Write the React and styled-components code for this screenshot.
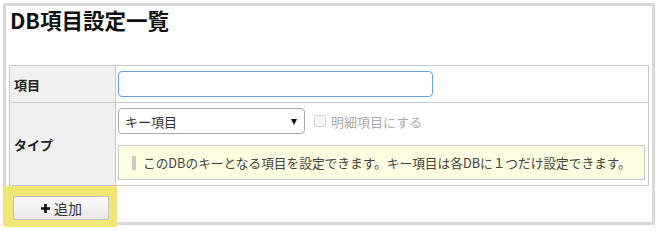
import styled, { createGlobalStyle } from "styled-components"

const GlobalStyle = createGlobalStyle`
  html, body {
    margin: 0;
    background: #fff;
  }
  body {
    font-family: "Noto Sans CJK JP", "Noto Sans", sans-serif;
    color: #333;
    font-size: 13px;
  }
`

const App = () => {
  return (
    <Page>
      <GlobalStyle />
      <Panel>
        <Title>DB項目設定一覧</Title>
        <FormTable>
          <tbody>
            <tr>
              <LabelCell $height={37}>項目</LabelCell>
              <FieldCell>
                <TextInput type="text" />
              </FieldCell>
            </tr>
            <tr>
              <LabelCell $height={83}>タイプ</LabelCell>
              <FieldCell>
                <ControlRow>
                  <SelectWrap>
                    <Select defaultValue="key">
                      <option value="key">キー項目</option>
                    </Select>
                    <Arrow />
                  </SelectWrap>
                  <CheckLabel>
                    <CheckBox />
                    明細項目にする
                  </CheckLabel>
                </ControlRow>
                <Hint>
                  <HintBar />
                  このDBのキーとなる項目を設定できます。キー項目は各DBに１つだけ設定できます。
                </Hint>
              </FieldCell>
            </tr>
          </tbody>
        </FormTable>
        <Highlight>
          <AddButton type="button">
            <svg width="9" height="9" viewBox="0 0 9 9">
              <rect x="3.2" y="0" width="2.6" height="9" fill="#111" />
              <rect x="0" y="3.2" width="9" height="2.6" fill="#111" />
            </svg>
            追加
          </AddButton>
        </Highlight>
      </Panel>
    </Page>
  )
}

const Page = styled.div`
  padding: 3px;
`

const Panel = styled.div`
  box-sizing: border-box;
  height: 222px;
  border: 3px solid #d9d9d9;
  padding: 0 3px;
`

const Title = styled.h1`
  margin: 0 0 31px;
  padding-left: 1px;
  font-size: 21.5px;
  line-height: 28px;
  font-weight: 700;
  color: #111;
`

const FormTable = styled.table`
  width: 640px;
  border-collapse: collapse;
  table-layout: fixed;
`

const LabelCell = styled.th`
  box-sizing: border-box;
  width: 106px;
  height: ${p => p.$height}px;
  padding: 0 0 0 4px;
  border: 1px solid #c9c9c9;
  background: #f0f0f0;
  text-align: left;
  vertical-align: middle;
  font-size: 13px;
  font-weight: 700;
  color: #222;
`

const FieldCell = styled.td`
  padding: 5px 3px 4px 2px;
  border: 1px solid #c9c9c9;
  vertical-align: top;
`

const TextInput = styled.input`
  display: block;
  box-sizing: border-box;
  width: 315px;
  height: 26px;
  margin: 0;
  border: 1px solid #66a3e0;
  border-radius: 4px;
  outline: none;
  background: #fff;
`

const ControlRow = styled.div`
  display: flex;
  align-items: center;
  height: 26px;
`

const SelectWrap = styled.div`
  position: relative;
  width: 187px;
  height: 26px;
`

const Select = styled.select`
  appearance: none;
  box-sizing: border-box;
  width: 100%;
  height: 100%;
  margin: 0;
  padding: 0 0 0 6px;
  border: 1px solid #aaa;
  border-radius: 4px;
  background: #fff;
  font-family: inherit;
  font-size: 13px;
  color: #333;
`

const Arrow = styled.span`
  position: absolute;
  right: 8px;
  top: 11px;
  width: 0;
  height: 0;
  border-left: 3.5px solid transparent;
  border-right: 3.5px solid transparent;
  border-top: 6px solid #111;
  pointer-events: none;
`

const CheckLabel = styled.label`
  display: flex;
  align-items: center;
  margin-left: 9px;
  font-size: 13px;
  color: #ababab;
`

const CheckBox = styled.span`
  box-sizing: border-box;
  width: 12px;
  height: 12px;
  margin-right: 5px;
  border: 1px solid #d6d6d6;
  border-radius: 2px;
  background: #f6f6f6;
`

const Hint = styled.div`
  box-sizing: border-box;
  display: flex;
  align-items: center;
  height: 35px;
  margin-top: 11px;
  padding-left: 13px;
  border: 1px solid #c9c9c9;
  background: #fdfde1;
  font-size: 12.7px;
  color: #444;
  white-space: nowrap;
`

const HintBar = styled.span`
  width: 4px;
  height: 14px;
  margin-right: 7px;
  background: #c9c9c9;
`

const Highlight = styled.div`
  width: fit-content;
  margin-left: -5px;
  padding: 10px 8px 7px 9px;
  background: #f1e676;
`

const AddButton = styled.button`
  box-sizing: border-box;
  display: flex;
  align-items: center;
  justify-content: center;
  gap: 4px;
  width: 96px;
  height: 24px;
  margin: 0;
  padding: 0 0 0 1px;
  border: 1px solid #c4c4c4;
  border-radius: 2px;
  background: linear-gradient(#fdfdfd, #e8e8e8);
  font-family: inherit;
  font-size: 14px;
  color: #333;
`

export default App
